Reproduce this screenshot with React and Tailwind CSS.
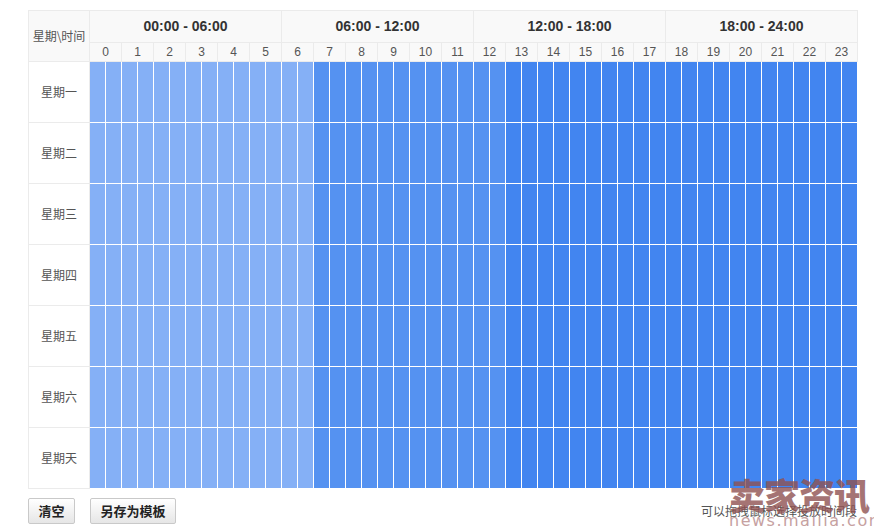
import React from 'react';

const DAYS = ['星期一', '星期二', '星期三', '星期四', '星期五', '星期六', '星期天'];
const GROUPS = ['00:00 - 06:00', '06:00 - 12:00', '12:00 - 18:00', '18:00 - 24:00'];
const HOURS = Array.from({ length: 24 }, (_, i) => i);
const SLOTS = Array.from({ length: 48 }, (_, i) => i);

// shade by hour: 0-6 light, 7-12 medium, 13-23 dark
const slotColor = (slot) => {
  const h = Math.floor(slot / 2);
  if (h <= 6) return 'bg-[#85b0f6]';
  if (h <= 12) return 'bg-[#5592f1]';
  return 'bg-[#4285f0]';
};

const cjk = { fontFamily: '"Noto Sans CJK SC", "Liberation Sans", sans-serif' };
const latin = { fontFamily: '"Liberation Sans", Arial, sans-serif' };

export default function App() {
  return (
    <div className="relative w-[874px] h-[526px] bg-white overflow-hidden">
      <div className="pt-[10px] pl-[28px]">
        <div className="w-[830px] border-l border-t border-[#ebebeb]">
          {/* Header */}
          <div className="flex bg-[#f9f9f9]">
            <div
              className="w-[61px] h-[51px] flex items-center justify-center border-r border-b border-[#ebebeb] text-[12px] text-[#555] whitespace-nowrap"
              style={cjk}
            >
              星期\时间
            </div>
            <div className="flex flex-col">
              <div className="flex">
                {GROUPS.map((g) => (
                  <div
                    key={g}
                    className="w-[192px] h-[32px] flex items-center justify-center border-r border-b border-[#ebebeb] text-[14px] font-bold text-[#333]"
                    style={latin}
                  >
                    {g}
                  </div>
                ))}
              </div>
              <div className="flex">
                {HOURS.map((h) => (
                  <div
                    key={h}
                    className="w-[32px] h-[19px] flex items-center justify-center border-r border-b border-[#ebebeb] text-[12px] text-[#555]"
                    style={latin}
                  >
                    {h}
                  </div>
                ))}
              </div>
            </div>
          </div>

          {/* Body */}
          {DAYS.map((d) => (
            <div key={d} className="flex">
              <div
                className="w-[61px] h-[61px] flex items-center justify-center border-r border-b border-[#ebebeb] text-[12px] text-[#555] bg-white"
                style={cjk}
              >
                {d}
              </div>
              {SLOTS.map((s) => (
                <div
                  key={s}
                  className={`w-[16px] h-[61px] border-r border-b border-white ${slotColor(s)}`}
                />
              ))}
            </div>
          ))}
        </div>

        {/* Footer */}
        <div className="flex items-center mt-[9px] w-[830px]">
          <button
            className="w-[47px] h-[26px] border border-[#c9c9c9] rounded-[2px] bg-gradient-to-b from-white to-[#e6e6e6] text-[13px] font-bold text-[#222] flex items-center justify-center"
            style={cjk}
          >
            清空
          </button>
          <button
            className="ml-[15px] w-[86px] h-[26px] border border-[#c9c9c9] rounded-[2px] bg-gradient-to-b from-white to-[#e6e6e6] text-[13px] font-bold text-[#222] flex items-center justify-center"
            style={cjk}
          >
            另存为模板
          </button>
          <div className="ml-auto mr-[1px] text-[12px] text-[#555]" style={cjk}>
            可以拖拽鼠标选择投放时间段
          </div>
        </div>
      </div>

      {/* watermark */}
      <div className="absolute left-[729px] top-[474px] pointer-events-none flex flex-col items-start">
        <div
          className="text-[36px] leading-[40px] font-black text-[#8f5252] opacity-80 tracking-[-1px]"
          style={cjk}
        >
          卖家资讯
        </div>
        <div
          className="text-[16px] leading-[14px] text-[#b88a8a] opacity-80 tracking-[1.5px]"
          style={{ fontFamily: '"DejaVu Sans", sans-serif' }}
        >
          news.maijia.com
        </div>
      </div>
    </div>
  );
}
